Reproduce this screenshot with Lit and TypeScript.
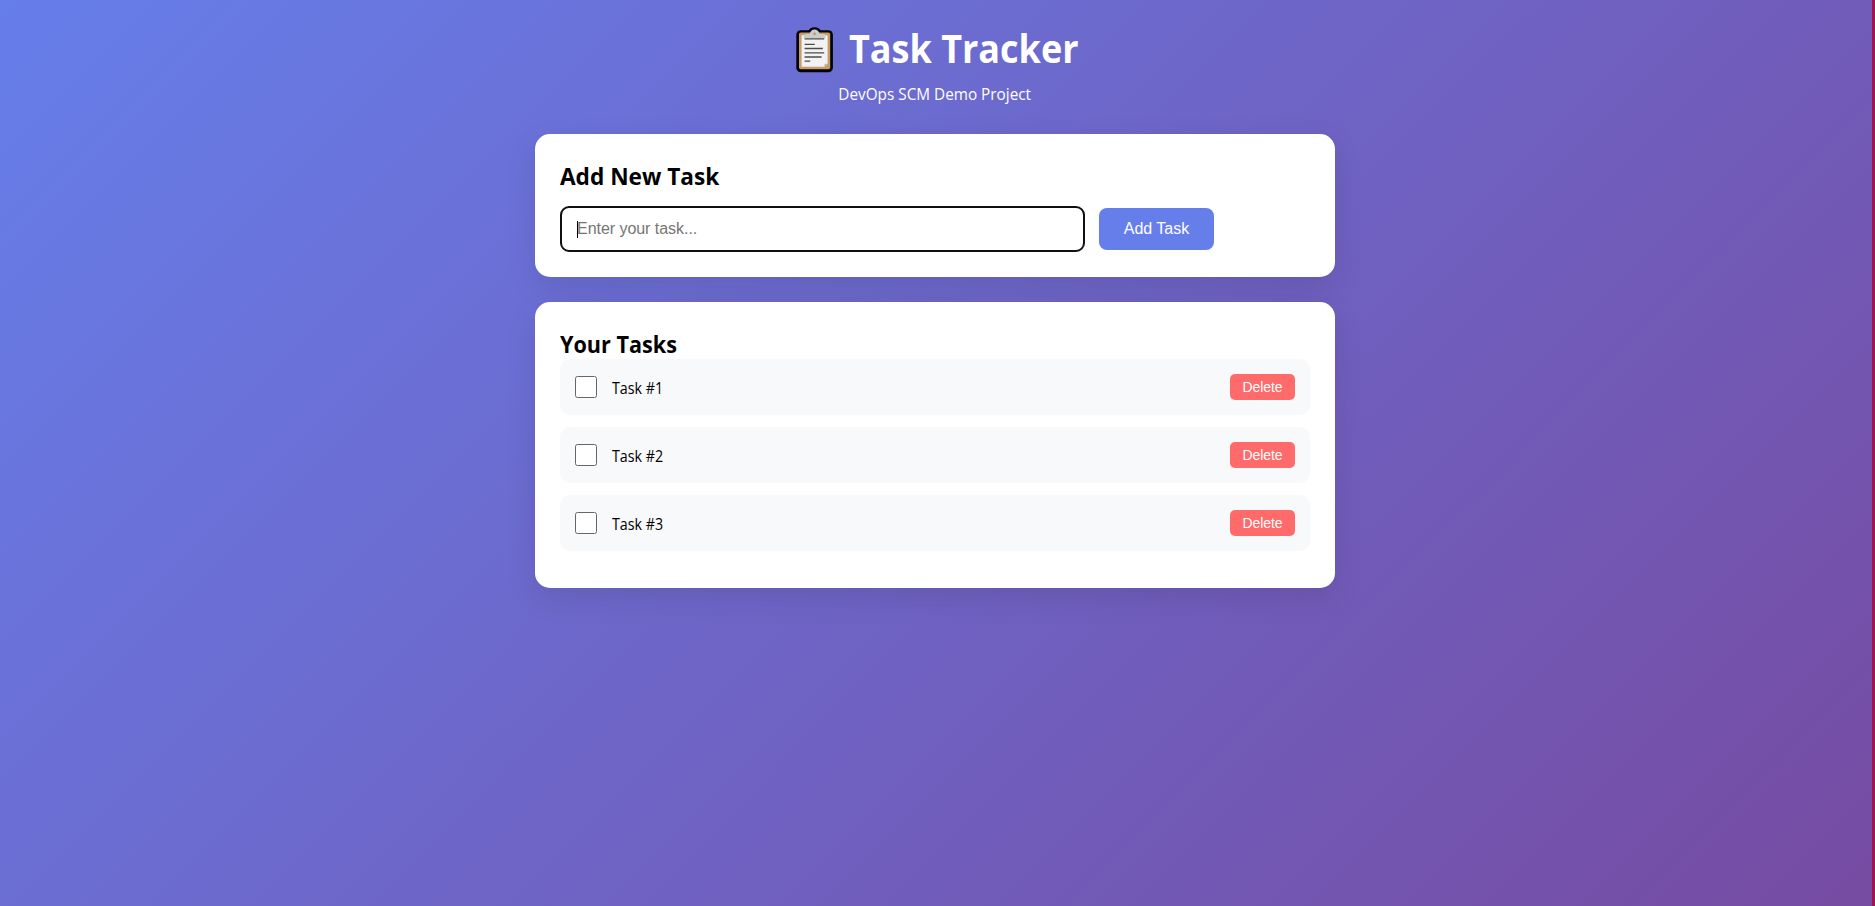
import { LitElement, html, css } from "lit";
import { customElement, property, state } from "lit/decorators.js";

@customElement("clipboard-icon")
class ClipboardIcon extends LitElement {
  static styles = css`
    :host { display: block; width: 38px; height: 46px; margin-top: -1px; }
    svg { display: block; }
  `;
  render() {
    return html`<svg width="38" height="46" viewBox="0 0 38 46" aria-hidden="true">
      <rect x="0.3" y="3.2" width="36.6" height="42" rx="4.5" fill="#030305" />
      <path d="M12 4.5C13 1.8 15.5 0.3 18.6 0.3S24.2 1.8 25.2 4.5Z" fill="#030305" />
      <rect x="3" y="5.5" width="31.2" height="36.8" rx="1.8" fill="#c69c6d" />
      <path d="M5.6 8.3h26v28.500l-3.200 2.900H5.600z" fill="#f2f2f2" />
      <path d="M28.400 39.700v-2.100q0-.8.8-.8h2.400z" fill="#bdbdbd" />
      <path d="M7.700 11.200V9.400q0-2.400 2.400-2.400h3.600q1-4.500 4.900-4.500T23.500 7h3.600q2.400 0 2.400 2.400v1.800z" fill="#cccccc" />
      <circle cx="18.600" cy="6.800" r="1.500" fill="#c69c6d" />
      <path d="M8.600 11.800h19.600M8.600 17.300h10.200M8.600 21.500h18.200M8.600 25.900h19.600M8.600 30h17M8.600 34.200h5.600" stroke="#4c4c4c" stroke-width="1.300" fill="none" />
    </svg>`;
  }
}

@customElement("task-row")
class TaskRow extends LitElement {
  @property() label = "";
  static styles = css`
    :host {
      display: flex; align-items: center; box-sizing: border-box;
      height: 56px; padding: 0 15px; margin-bottom: 12px;
      background: #f8f9fa; border-radius: 10px;
    }
    .check {
      appearance: none; box-sizing: border-box; width: 22px; height: 22px;
      margin: 0 15px 0 0; border: 1px solid #666; border-radius: 2.5px; background: #fff;
    }
    .label {
      flex: 1; padding-top: 2px; font-size: 16px; line-height: 21px; color: #000;
      transform: scaleX(0.89); transform-origin: left;
    }
    .delete {
      width: 65px; height: 26px; padding: 0; border: 0; border-radius: 5px;
      background: #ff6b6b; color: #fff; font: 14px/26px "Liberation Sans", Arial, sans-serif;
      letter-spacing: -0.05px;
    }
  `;
  render() {
    return html`<input class="check" type="checkbox" aria-label=${this.label} />
      <span class="label">${this.label}</span>
      <button class="delete">Delete</button>`;
  }
}

@customElement("app-root")
class AppRoot extends LitElement {
  @state() tasks = ["Task #1", "Task #2", "Task #3"];
  static styles = css`
    :host {
      display: block; box-sizing: border-box; height: 100vh; overflow: hidden;
      border-right: 3px solid #a01450;
      font-family: "Segoe UI", "Open Sans", sans-serif; color: #000;
      background: linear-gradient(135deg, #667eea 0%, #764ba2 100%);
    }
    .page { width: 800px; margin: 0 auto; padding: 20px 0; position: relative; left: -1px; }
    header { height: 114px; color: #fff; display: flex; flex-direction: column; align-items: center; }
    .title { display: flex; align-items: center; gap: 15px; height: 60px; padding-left: 4px; }
    h1 {
      margin: -5px 0 0; width: 229px; font-size: 40px; line-height: 54px; font-weight: 700;
      white-space: nowrap; transform: scaleX(0.9); transform-origin: left;
    }
    .sub { margin: 4px 0 0; font-size: 16px; line-height: 21px; transform: scaleX(0.957); }
    .card {
      box-sizing: border-box; padding: 25px; margin-bottom: 25px; background: #fff;
      border-radius: 15px; box-shadow: 0 10px 30px rgba(0, 0, 0, .1);
    }
    .add { height: 143px; }
    .list { height: 286px; }
    h2 {
      margin: 0; padding-top: 1px; font-size: 24px; line-height: 31px; font-weight: 700;
      white-space: nowrap; transform-origin: left;
    }
    .add h2 { transform: scaleX(0.943); }
    .list h2 { transform: scaleX(0.9); }
    .form { display: flex; align-items: center; gap: 14px; margin-top: 15px; }
    .field { position: relative; width: 525px; height: 46px; }
    .field input {
      box-sizing: border-box; width: 100%; height: 100%; padding: 0 15px; margin: 0; display: block;
      border: 2px solid #101010; border-radius: 9px; outline: 0; background: #fff;
      font: 16px "Liberation Sans", Arial, sans-serif;
    }
    .field input::placeholder { color: #757575; opacity: 1; letter-spacing: -0.04px; }
    .caret { position: absolute; left: 17px; top: 15px; width: 1px; height: 17px; background: #000; }
    .submit {
      width: 115px; height: 42px; padding: 0; border: 0; border-radius: 8px;
      background: #667eea; color: #fff; font: 16px "Liberation Sans", Arial, sans-serif;
    }
  `;
  render() {
    return html`<div class="page">
      <header>
        <div class="title"><clipboard-icon></clipboard-icon><h1>Task Tracker</h1></div>
        <p class="sub">DevOps SCM Demo Project</p>
      </header>
      <section class="card add">
        <h2>Add New Task</h2>
        <div class="form">
          <div class="field"><input placeholder="Enter your task..." /><span class="caret"></span></div>
          <button class="submit">Add Task</button>
        </div>
      </section>
      <section class="card list">
        <h2>Your Tasks</h2>
        ${this.tasks.map((t) => html`<task-row .label=${t}></task-row>`)}
      </section>
    </div>`;
  }
}
